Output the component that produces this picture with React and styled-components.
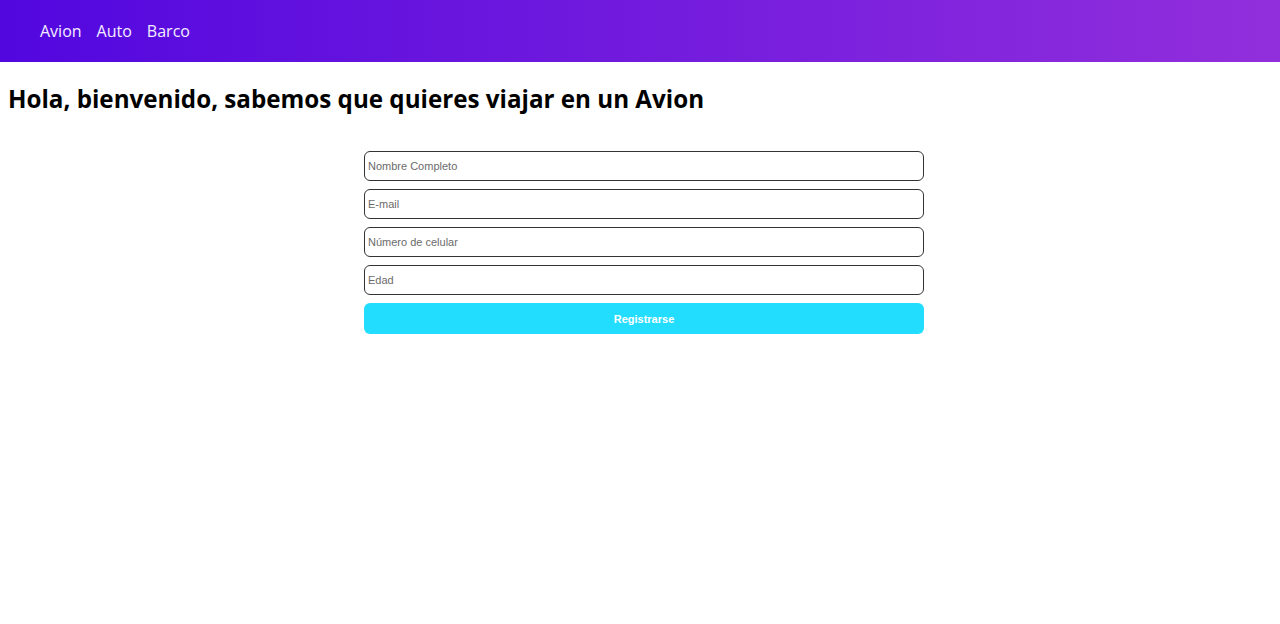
import React from 'react';
import styled, { createGlobalStyle } from 'styled-components';

const GlobalStyle = createGlobalStyle`
    body {
        margin: 0;
        background: #fff;
        font-family: "Open Sans", "Noto Sans", sans-serif;
    }
`;

const Header = styled.header`
    height: 62px;
    display: flex;
    align-items: center;
    padding: 0 40px;
    background: linear-gradient(to right, #5207df, #922fdc);
`;

const Nav = styled.nav`
    display: flex;
    gap: 15px;
`;

const NavLink = styled.a`
    color: #f4eeff;
    font-size: 16px;
    text-decoration: none;
    cursor: pointer;
`;

const Main = styled.main`
    padding: 0 0 0 8px;
`;

const Title = styled.h1`
    margin: 20px 0 36px;
    font-size: 24.2px;
    font-weight: 700;
    color: #000;
`;

const Form = styled.form`
    width: 560px;
    margin: 0 auto;
    display: flex;
    flex-direction: column;
    gap: 8.5px;
`;

const Input = styled.input`
    box-sizing: border-box;
    height: 29.5px;
    padding: 0 3px;
    border: 1px solid #333;
    border-radius: 6px;
    font-family: "Liberation Sans", Arial, sans-serif;
    font-size: 11px;
    &::placeholder {
        color: #6b6b6b;
    }
`;

const Button = styled.button`
    height: 31px;
    border: none;
    border-radius: 6px;
    background: #22ddfe;
    color: #fff;
    font-family: "Liberation Sans", Arial, sans-serif;
    font-size: 11px;
    font-weight: 700;
    cursor: pointer;
`;

const fields = ['Nombre Completo', 'E-mail', 'Número de celular', 'Edad'];

export default function App() {
    return (
        <>
            <GlobalStyle />
            <Header>
                <Nav>
                    <NavLink>Avion</NavLink>
                    <NavLink>Auto</NavLink>
                    <NavLink>Barco</NavLink>
                </Nav>
            </Header>
            <Main>
                <Title>Hola, bienvenido, sabemos que quieres viajar en un Avion</Title>
                <Form onSubmit={e => e.preventDefault()}>
                    {fields.map(f => <Input key={f} placeholder={f} />)}
                    <Button type="submit">Registrarse</Button>
                </Form>
            </Main>
        </>
    );
}
